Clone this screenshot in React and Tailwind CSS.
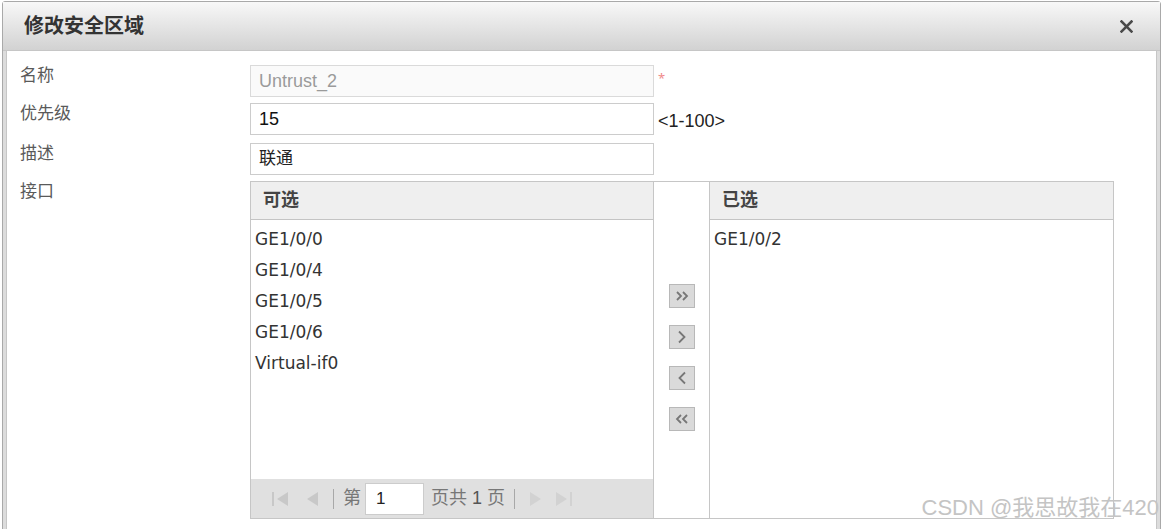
import React from 'react';

const CJK = "font-['Liberation_Sans','Noto_Sans_CJK_SC',sans-serif]";
const ITEM = "font-['DejaVu_Sans','Noto_Sans_CJK_SC',sans-serif]";

const DISPONIBLES = ['GE1/0/0', 'GE1/0/4', 'GE1/0/5', 'GE1/0/6', 'Virtual-if0'];
const SELECCIONADOS = ['GE1/0/2'];

function Chevron({ dir = 'right', doble = false }) {
  const pts = dir === 'right' ? ['3,3 7,7 3,11', '9,3 13,7 9,11'] : ['13,3 9,7 13,11', '7,3 3,7 7,11'];
  return (
    <svg width="16" height="14" viewBox="0 0 16 14" fill="none" stroke="#777" strokeWidth="1.8">
      {doble ? (
        pts.map((p) => <polyline key={p} points={p} />)
      ) : (
        <polyline points={dir === 'right' ? '5,1.5 10.5,7 5,12.5' : '11,1.5 5.5,7 11,12.5'} />
      )}
    </svg>
  );
}

function BotonMover({ dir, doble }) {
  return (
    <button
      type="button"
      className="flex h-[24px] w-[26px] items-center justify-center border border-[#b8b8b8] bg-[#dadada]"
    >
      <Chevron dir={dir} doble={doble} />
    </button>
  );
}

function Fila({ etiqueta, children, className = '' }) {
  return (
    <div className={`flex items-start ${className}`}>
      <span className={`w-[230px] text-[17px] leading-[22px] text-[#5a5a5a] ${CJK}`}>{etiqueta}</span>
      {children}
    </div>
  );
}

function Paginador() {
  return (
    <div className={`mt-auto flex h-[39px] items-center bg-[#e0e0e0] pl-[21px] text-[18px] text-[#777] ${CJK}`}>
      <svg width="18" height="16" viewBox="0 0 18 16" fill="#c8c8c8">
        <rect x="0" y="1" width="2" height="14" />
        <polygon points="16,1 5,8 16,15" />
      </svg>
      <svg className="ml-[15px]" width="14" height="16" viewBox="0 0 14 16" fill="#c8c8c8">
        <polygon points="13,1 2,8 13,15" />
      </svg>
      <span className="ml-[14px] h-[20px] w-px bg-[#a8a8a8]" />
      <span className="ml-[9px]">第</span>
      <span className="ml-[4px] flex h-[32px] w-[59px] items-center border border-[#cccccc] bg-white pl-[10px] text-[17px] text-[#222]">
        1
      </span>
      <span className="ml-[7px]">
        页共 <span className="text-[#555]">1</span> 页
      </span>
      <span className="ml-[9px] h-[20px] w-px bg-[#a8a8a8]" />
      <svg className="ml-[14px]" width="14" height="16" viewBox="0 0 14 16" fill="#d2d2d2">
        <polygon points="1,1 12,8 1,15" />
      </svg>
      <svg className="ml-[11px]" width="18" height="16" viewBox="0 0 18 16" fill="#d2d2d2">
        <polygon points="2,1 13,8 2,15" />
        <rect x="16" y="1" width="2" height="14" />
      </svg>
    </div>
  );
}

function Lista({ titulo, items, conPaginador, className = '' }) {
  return (
    <div className={`flex flex-col ${className}`}>
      <div className={`flex h-[38px] items-center border-b border-[#c4c4c4] bg-[#efefef] pl-[12px] text-[18px] font-bold text-[#444] ${CJK}`}>
        {titulo}
      </div>
      <ul className={`pt-[4px] text-[17px] text-[#333] ${ITEM}`}>
        {items.map((it) => (
          <li key={it} className="flex h-[31px] items-center pl-[4px]">
            {it}
          </li>
        ))}
      </ul>
      {conPaginador && <Paginador />}
    </div>
  );
}

export default function App() {
  return (
    <div className="relative h-[529px] w-[1162px] overflow-hidden bg-white">
      <div className="ml-[2px] mt-[1px] w-[1159px] rounded-t-[3px] border border-[#a9a9a9] bg-[#dcdcdc]">
        <div className="flex h-[49px] items-center justify-between border-b border-[#c6c6c6] bg-gradient-to-b from-[#f8f8f8] to-[#d2d2d2] pl-[21px] pr-[27px]">
          <span className={`text-[20px] font-bold text-[#333] ${CJK}`}>修改安全区域</span>
          <svg width="13" height="13" viewBox="0 0 13 13" stroke="#4a4a4a" strokeWidth="2.6" strokeLinecap="square">
            <line x1="1.5" y1="1.5" x2="11.5" y2="11.5" />
            <line x1="11.5" y1="1.5" x2="1.5" y2="11.5" />
          </svg>
        </div>

        <div className="mx-[3px] h-[520px] border-x border-[#c6c6c6] bg-white pl-[13px] pt-[14px]">
          <Fila etiqueta="名称">
            <div className="flex h-[32px] w-[404px] items-center border border-[#dadada] bg-[#fafafa] pl-[8px] font-['Liberation_Sans'] text-[18px] text-[#9a9a9a]">
              Untrust_2
            </div>
            <span className="ml-[4px] mt-[4px] text-[13px] text-[#f08a8a]">*</span>
          </Fila>

          <Fila etiqueta="优先级" className="mt-[6px]">
            <div className="flex h-[32px] w-[404px] items-center border border-[#cccccc] bg-white pl-[8px] font-['Liberation_Sans'] text-[18px] text-[#111]">
              15
            </div>
            <span className="ml-[4px] mt-[5px] font-['Liberation_Sans'] text-[18px] text-[#222]">&lt;1-100&gt;</span>
          </Fila>

          <Fila etiqueta="描述" className="mt-[8px]">
            <div className={`flex h-[32px] w-[404px] items-center border border-[#cccccc] bg-white pl-[8px] text-[17px] text-[#222] ${CJK}`}>
              联通
            </div>
          </Fila>

          <Fila etiqueta="接口" className="mt-[6px]">
            <div className="flex h-[338px] w-[864px] border border-[#c6c6c6]">
              <Lista titulo="可选" items={DISPONIBLES} conPaginador className="w-[403px] border-r border-[#c6c6c6]" />
              <div className="flex w-[56px] flex-col items-center gap-[17px] border-r border-[#c6c6c6] pt-[102px]">
                <BotonMover dir="right" doble />
                <BotonMover dir="right" />
                <BotonMover dir="left" />
                <BotonMover dir="left" doble />
              </div>
              <Lista titulo="已选" items={SELECCIONADOS} className="flex-1" />
            </div>
          </Fila>
        </div>
      </div>

      <span className={`absolute bottom-[5px] right-[3px] text-[22px] text-[#c4c4c4] ${CJK}`}>CSDN @我思故我在420</span>
    </div>
  );
}
